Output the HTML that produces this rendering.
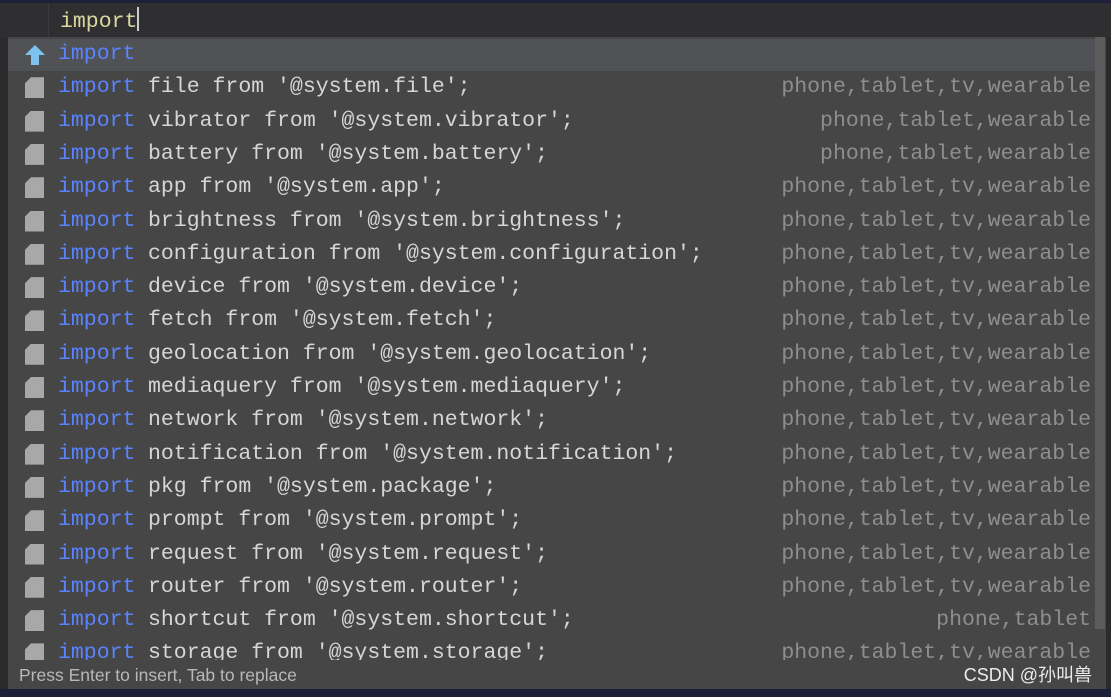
<!DOCTYPE html>
<html><head><meta charset="utf-8"><style>
*{margin:0;padding:0;box-sizing:border-box}
body{width:1111px;height:697px;background:#2b2b2e;position:relative;overflow:hidden;font-family:"Liberation Mono",monospace}
.topline{position:absolute;left:0;top:0;width:1111px;height:3px;background:#1e1f38}
.bar{position:absolute;left:0;top:3px;width:1111px;height:34px;background:#2f2f31}
.gut{position:absolute;left:48px;top:3px;width:1px;height:34px;background:#3c3c3e}
.typed{position:absolute;left:60px;top:7px;font-size:21.5px;color:#d8d8a0;line-height:26px}
.caret{display:inline-block;width:2px;height:24px;background:#ccc;vertical-align:-4px}
.pop{position:absolute;left:8px;top:37px;width:1098px;height:652px;background:#464646}
.row{position:absolute;left:0;width:1087px;height:33.3px;font-size:21.5px;line-height:33px;white-space:pre;color:#d6d6d6}
.row.sel{background:#515255}
.kw{color:#5a83ff;position:absolute;left:50px}
.rest{position:absolute;left:140px}
.dev{position:absolute;right:4px;color:#8e8e8e}
.ic{position:absolute;left:17px;top:6px;width:19px;height:21px;background:#a8a8a8;clip-path:polygon(6px 0,19px 0,19px 21px,0 21px,0 6px)}
.up{position:absolute;left:16px;top:6px}
.sb{position:absolute;left:1087px;top:0;width:10px;height:592px;background:#5c5c5c}
.foot{position:absolute;left:0;top:623px;width:1098px;height:29px;background:#464646;font-family:"Liberation Sans",sans-serif;font-size:17.5px;color:#b8b8b8;padding-left:11px;line-height:30px}
.wm{position:absolute;right:14px;top:0;color:#ececec;font-family:"Liberation Sans","Noto Sans CJK SC",sans-serif;font-size:18px}
.botline{position:absolute;left:0;top:689px;width:1111px;height:8px;background:#1e1f38}
.rows{position:absolute;left:0;top:2px;width:1087px;height:621px;overflow:hidden}
</style></head><body>
<div class="topline"></div>
<div class="bar"></div><div class="gut"></div>
<div class="typed">import<span class="caret"></span></div>
<div class="pop">
<div class="rows">
<div class="row sel" style="top:-1px"><svg class="up" width="22" height="22" viewBox="0 0 22 22"><path d="M11 1 L21 11 L15 11 L15 21 L7 21 L7 11 L1 11 Z" fill="#7ec3f0"/></svg><span class="kw">import</span></div>
<div class="row" style="top:32.3px"><i class="ic"></i><span class="kw">import</span><span class="rest">file from '@system.file';</span><span class="dev">phone,tablet,tv,wearable</span></div>
<div class="row" style="top:65.6px"><i class="ic"></i><span class="kw">import</span><span class="rest">vibrator from '@system.vibrator';</span><span class="dev">phone,tablet,wearable</span></div>
<div class="row" style="top:98.9px"><i class="ic"></i><span class="kw">import</span><span class="rest">battery from '@system.battery';</span><span class="dev">phone,tablet,wearable</span></div>
<div class="row" style="top:132.2px"><i class="ic"></i><span class="kw">import</span><span class="rest">app from '@system.app';</span><span class="dev">phone,tablet,tv,wearable</span></div>
<div class="row" style="top:165.5px"><i class="ic"></i><span class="kw">import</span><span class="rest">brightness from '@system.brightness';</span><span class="dev">phone,tablet,tv,wearable</span></div>
<div class="row" style="top:198.8px"><i class="ic"></i><span class="kw">import</span><span class="rest">configuration from '@system.configuration';</span><span class="dev">phone,tablet,tv,wearable</span></div>
<div class="row" style="top:232.1px"><i class="ic"></i><span class="kw">import</span><span class="rest">device from '@system.device';</span><span class="dev">phone,tablet,tv,wearable</span></div>
<div class="row" style="top:265.4px"><i class="ic"></i><span class="kw">import</span><span class="rest">fetch from '@system.fetch';</span><span class="dev">phone,tablet,tv,wearable</span></div>
<div class="row" style="top:298.7px"><i class="ic"></i><span class="kw">import</span><span class="rest">geolocation from '@system.geolocation';</span><span class="dev">phone,tablet,tv,wearable</span></div>
<div class="row" style="top:332px"><i class="ic"></i><span class="kw">import</span><span class="rest">mediaquery from '@system.mediaquery';</span><span class="dev">phone,tablet,tv,wearable</span></div>
<div class="row" style="top:365.3px"><i class="ic"></i><span class="kw">import</span><span class="rest">network from '@system.network';</span><span class="dev">phone,tablet,tv,wearable</span></div>
<div class="row" style="top:398.6px"><i class="ic"></i><span class="kw">import</span><span class="rest">notification from '@system.notification';</span><span class="dev">phone,tablet,tv,wearable</span></div>
<div class="row" style="top:431.9px"><i class="ic"></i><span class="kw">import</span><span class="rest">pkg from '@system.package';</span><span class="dev">phone,tablet,tv,wearable</span></div>
<div class="row" style="top:465.2px"><i class="ic"></i><span class="kw">import</span><span class="rest">prompt from '@system.prompt';</span><span class="dev">phone,tablet,tv,wearable</span></div>
<div class="row" style="top:498.5px"><i class="ic"></i><span class="kw">import</span><span class="rest">request from '@system.request';</span><span class="dev">phone,tablet,tv,wearable</span></div>
<div class="row" style="top:531.8px"><i class="ic"></i><span class="kw">import</span><span class="rest">router from '@system.router';</span><span class="dev">phone,tablet,tv,wearable</span></div>
<div class="row" style="top:565.1px"><i class="ic"></i><span class="kw">import</span><span class="rest">shortcut from '@system.shortcut';</span><span class="dev">phone,tablet</span></div>
<div class="row" style="top:598.4px"><i class="ic"></i><span class="kw">import</span><span class="rest">storage from '@system.storage';</span><span class="dev">phone,tablet,tv,wearable</span></div>
</div>
<div class="sb"></div>
<div class="foot">Press Enter to insert, Tab to replace<span class="wm">CSDN @孙叫兽</span></div>
</div>
<div class="botline"></div>
</body></html>
